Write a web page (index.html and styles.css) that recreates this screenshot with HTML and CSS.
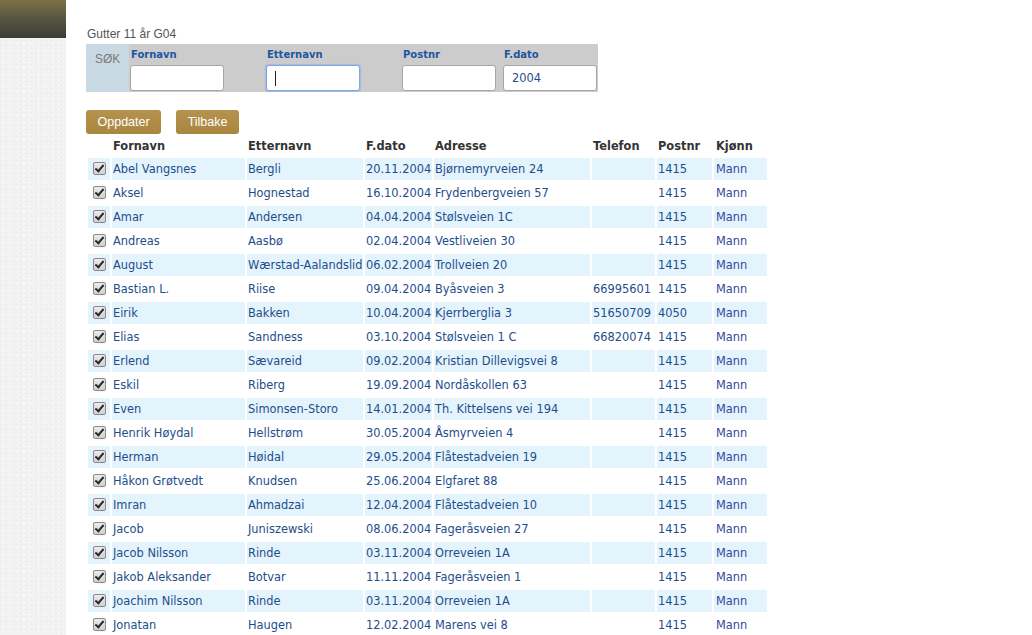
FILE: index.html
```html
<!DOCTYPE html>
<html lang="no">
<head>
<meta charset="utf-8">
<title>Gutter 11 år G04</title>
<link rel="stylesheet" href="styles.css">
</head>
<body>
<div class="page">
  <aside class="sidebar">
    <div class="sidebar-top"></div>
  </aside>
  <main class="main">
    <div class="title">Gutter 11 år G04</div>
    <form class="search">
      <div class="sok">SØK</div>
      <div class="fields">
        <label class="field">
          <span class="field-label">Fornavn</span>
          <input class="field-input" type="text">
        </label>
        <label class="field">
          <span class="field-label">Etternavn</span>
          <span class="input-wrap">
            <input class="field-input focused" type="text">
            <span class="caret"></span>
          </span>
        </label>
        <label class="field field-short">
          <span class="field-label">Postnr</span>
          <input class="field-input" type="text">
        </label>
        <label class="field field-last">
          <span class="field-label">F.dato</span>
          <input class="field-input" type="text" value="2004">
        </label>
      </div>
    </form>
    <div class="buttons">
      <button class="btn" type="button">Oppdater</button>
      <button class="btn" type="button">Tilbake</button>
    </div>
    <table class="list">
      <colgroup>
        <col class="c-cb"><col class="c-fn"><col class="c-en"><col class="c-fd"><col class="c-ad"><col class="c-tf"><col class="c-pn"><col class="c-kj">
      </colgroup>
      <thead>
        <tr><th></th><th>Fornavn</th><th>Etternavn</th><th>F.dato</th><th>Adresse</th><th>Telefon</th><th>Postnr</th><th>Kjønn</th></tr>
      </thead>
      <tbody>
        <tr><td><span class="cb"></span></td><td>Abel Vangsnes</td><td>Bergli</td><td>20.11.2004</td><td>Bjørnemyrveien 24</td><td></td><td>1415</td><td>Mann</td></tr>
        <tr><td><span class="cb"></span></td><td>Aksel</td><td>Hognestad</td><td>16.10.2004</td><td>Frydenbergveien 57</td><td></td><td>1415</td><td>Mann</td></tr>
        <tr><td><span class="cb"></span></td><td>Amar</td><td>Andersen</td><td>04.04.2004</td><td>Stølsveien 1C</td><td></td><td>1415</td><td>Mann</td></tr>
        <tr><td><span class="cb"></span></td><td>Andreas</td><td>Aasbø</td><td>02.04.2004</td><td>Vestliveien 30</td><td></td><td>1415</td><td>Mann</td></tr>
        <tr><td><span class="cb"></span></td><td>August</td><td>Wærstad-Aalandslid</td><td>06.02.2004</td><td>Trollveien 20</td><td></td><td>1415</td><td>Mann</td></tr>
        <tr><td><span class="cb"></span></td><td>Bastian L.</td><td>Riise</td><td>09.04.2004</td><td>Byåsveien 3</td><td>66995601</td><td>1415</td><td>Mann</td></tr>
        <tr><td><span class="cb"></span></td><td>Eirik</td><td>Bakken</td><td>10.04.2004</td><td>Kjerrberglia 3</td><td>51650709</td><td>4050</td><td>Mann</td></tr>
        <tr><td><span class="cb"></span></td><td>Elias</td><td>Sandness</td><td>03.10.2004</td><td>Stølsveien 1 C</td><td>66820074</td><td>1415</td><td>Mann</td></tr>
        <tr><td><span class="cb"></span></td><td>Erlend</td><td>Sævareid</td><td>09.02.2004</td><td>Kristian Dillevigsvei 8</td><td></td><td>1415</td><td>Mann</td></tr>
        <tr><td><span class="cb"></span></td><td>Eskil</td><td>Riberg</td><td>19.09.2004</td><td>Nordåskollen 63</td><td></td><td>1415</td><td>Mann</td></tr>
        <tr><td><span class="cb"></span></td><td>Even</td><td>Simonsen-Storo</td><td>14.01.2004</td><td>Th. Kittelsens vei 194</td><td></td><td>1415</td><td>Mann</td></tr>
        <tr><td><span class="cb"></span></td><td>Henrik Høydal</td><td>Hellstrøm</td><td>30.05.2004</td><td>Åsmyrveien 4</td><td></td><td>1415</td><td>Mann</td></tr>
        <tr><td><span class="cb"></span></td><td>Herman</td><td>Høidal</td><td>29.05.2004</td><td>Flåtestadveien 19</td><td></td><td>1415</td><td>Mann</td></tr>
        <tr><td><span class="cb"></span></td><td>Håkon Grøtvedt</td><td>Knudsen</td><td>25.06.2004</td><td>Elgfaret 88</td><td></td><td>1415</td><td>Mann</td></tr>
        <tr><td><span class="cb"></span></td><td>Imran</td><td>Ahmadzai</td><td>12.04.2004</td><td>Flåtestadveien 10</td><td></td><td>1415</td><td>Mann</td></tr>
        <tr><td><span class="cb"></span></td><td>Jacob</td><td>Juniszewski</td><td>08.06.2004</td><td>Fageråsveien 27</td><td></td><td>1415</td><td>Mann</td></tr>
        <tr><td><span class="cb"></span></td><td>Jacob Nilsson</td><td>Rinde</td><td>03.11.2004</td><td>Orreveien 1A</td><td></td><td>1415</td><td>Mann</td></tr>
        <tr><td><span class="cb"></span></td><td>Jakob Aleksander</td><td>Botvar</td><td>11.11.2004</td><td>Fageråsveien 1</td><td></td><td>1415</td><td>Mann</td></tr>
        <tr><td><span class="cb"></span></td><td>Joachim Nilsson</td><td>Rinde</td><td>03.11.2004</td><td>Orreveien 1A</td><td></td><td>1415</td><td>Mann</td></tr>
        <tr><td><span class="cb"></span></td><td>Jonatan</td><td>Haugen</td><td>12.02.2004</td><td>Marens vei 8</td><td></td><td>1415</td><td>Mann</td></tr>
      </tbody>
    </table>
  </main>
</div>
</body>
</html>
```
FILE: styles.css
```css
html, body {
  margin: 0;
  padding: 0;
  background: #ffffff;
}

.page {
  display: flex;
  min-height: 100vh;
}

.sidebar {
  width: 66px;
  flex: 0 0 66px;
  background-color: #f2f2f2;
  background-image:
    radial-gradient(circle at 1px 1px, rgba(0,0,0,0.018) 1px, transparent 1.5px),
    radial-gradient(circle at 3px 2px, rgba(255,255,255,0.5) 1px, transparent 1.5px);
  background-size: 5px 4px, 7px 6px;
}

.sidebar-top {
  height: 38px;
  background: linear-gradient(to bottom, #7a7148 0%, #5a5740 45%, #3d3d3b 100%);
}

.main {
  flex: 1;
  padding: 27px 0 0 20px;
}

.title {
  font-family: "Liberation Sans", Arial, sans-serif;
  font-size: 12px;
  line-height: 14px;
  color: #555555;
  padding-left: 1px;
  margin-bottom: 3px;
}

.search {
  display: flex;
  width: 512px;
  margin: 0;
}

.sok {
  width: 43px;
  flex: 0 0 43px;
  box-sizing: border-box;
  background: #c9d9e3;
  padding: 8px 0 0 9px;
  font-family: "Liberation Sans", Arial, sans-serif;
  font-size: 12px;
  line-height: 14px;
  color: #7a7a7a;
}

.fields {
  flex: 1;
  display: flex;
  background: #cccccc;
  padding: 5px 0 1px 1px;
}

.field {
  display: flex;
  flex-direction: column;
  width: 136px;
}

.field-short {
  width: 101px;
}

.field-last {
  width: 95px;
}

.field-label {
  font-family: "DejaVu Sans", Verdana, sans-serif;
  font-weight: bold;
  font-size: 10px;
  line-height: 12px;
  color: #1d56a0;
  margin-bottom: 4px;
  padding-left: 1px;
}

.input-wrap {
  position: relative;
  display: block;
  width: 94px;
  height: 26px;
}

.field-input {
  display: block;
  width: 94px;
  height: 26px;
  box-sizing: border-box;
  margin: 0;
  border: 1px solid #a6a6a6;
  border-radius: 3px;
  background: #ffffff;
  padding: 0 8px;
  font-family: "DejaVu Sans", Verdana, sans-serif;
  font-size: 11.4px;
  color: #1e4d8c;
  outline: none;
}

.field-input.focused {
  border-color: #7fa6e0;
  box-shadow: 0 0 1px 1px rgba(120, 165, 230, 0.45);
}

.caret {
  position: absolute;
  left: 9px;
  top: 6px;
  width: 1px;
  height: 15px;
  background: #222222;
}

.buttons {
  display: flex;
  gap: 15px;
  margin-top: 18px;
}

.btn {
  height: 24px;
  padding: 0 11.5px;
  border: none;
  border-radius: 3px;
  background: linear-gradient(to bottom, #b5924e 0%, #a9873f 100%);
  color: #ffffff;
  font-family: "Liberation Sans", Arial, sans-serif;
  font-size: 12.5px;
  line-height: 24px;
  cursor: pointer;
}

.list {
  border-collapse: separate;
  border-spacing: 2px;
  table-layout: fixed;
  width: 683px;
  font-family: "DejaVu Sans", Verdana, sans-serif;
  font-size: 11.4px;
}

.c-cb { width: 22px; }
.c-fn { width: 133px; }
.c-en { width: 116px; }
.c-fd { width: 67px; }
.c-ad { width: 156px; }
.c-tf { width: 63px; }
.c-pn { width: 55px; }
.c-kj { width: 53px; }

.list th {
  height: 20px;
  padding: 0 0 0 1px;
  text-align: left;
  font-weight: bold;
  color: #333333;
  white-space: nowrap;
  vertical-align: middle;
}

.list td {
  height: 22px;
  padding: 0 0 0 1px;
  color: #1e4d8c;
  white-space: nowrap;
  overflow: visible;
  vertical-align: middle;
}

.list th:last-child,
.list td:last-child {
  padding-left: 2px;
}

.list tbody tr:nth-child(odd) td {
  background: #e4f4fd;
}

.list td:last-child {
  color: #33499a;
}

.cb {
  position: relative;
  display: block;
  width: 13px;
  height: 13px;
  box-sizing: border-box;
  margin: 0 0 1px 4px;
  border: 1px solid #8a8a8a;
  border-radius: 2px;
  background: linear-gradient(to bottom, #ececec 0%, #d0d0d0 100%);
}

.cb::after {
  content: "";
  position: absolute;
  left: 3px;
  top: 0px;
  width: 3px;
  height: 7px;
  border-right: 2px solid #2a2a2a;
  border-bottom: 2px solid #2a2a2a;
  transform: rotate(40deg);
}
```
